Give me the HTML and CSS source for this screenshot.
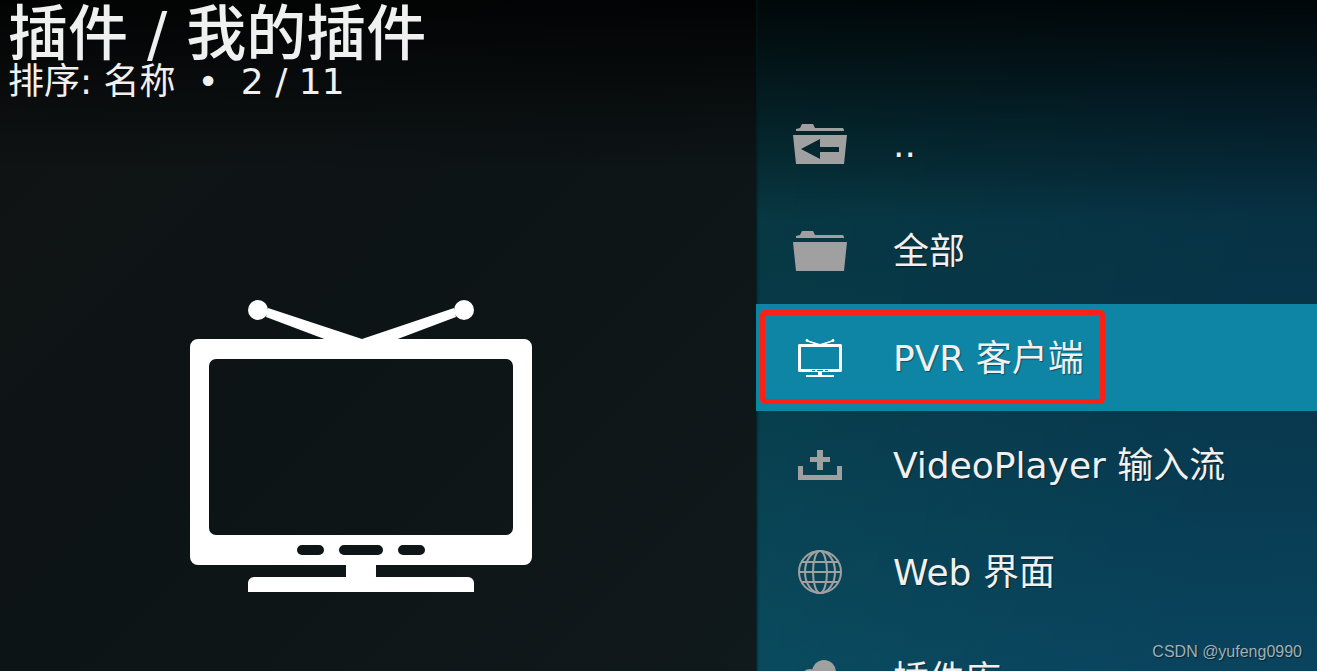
FILE: index.html
```
<!DOCTYPE html>
<html lang="zh-CN">
<head>
    <meta charset="UTF-8">
    <meta name="viewport" content="width=device-width, initial-scale=1.0">
    <title>插件 / 我的插件</title>
    <link rel="stylesheet" href="styles.css">
</head>
<body>
    <div class="screen">
        <!-- Left side: heading and preview -->
        <main class="preview">
            <header class="heading">
                <h1>插件 / 我的插件</h1>
                <p class="status"><span>排序: 名称</span><span>•</span><span>2 / 11</span></p>
            </header>
            <div class="artwork">
                <svg class="tv" viewBox="0 0 342 292" fill="#fff" aria-hidden="true">
                    <circle cx="68" cy="10" r="10"/>
                    <circle cx="274" cy="10" r="10"/>
                    <path d="M78 8 L172 39 L264 8 L266 17 L205 40 H137 L76 17 Z"/>
                    <path fill-rule="evenodd" d="M8 39H334a8 8 0 0 1 8 8V257a8 8 0 0 1-8 8H8a8 8 0 0 1-8-8V47a8 8 0 0 1 8-8Z
                        M26 59a7 7 0 0 0-7 7V228a7 7 0 0 0 7 7H316a7 7 0 0 0 7-7V66a7 7 0 0 0-7-7Z
                        M112 245a5 5 0 0 0 0 10H129a5 5 0 0 0 0-10Z
                        M154 245a5 5 0 0 0 0 10H188a5 5 0 0 0 0-10Z
                        M213 245a5 5 0 0 0 0 10H230a5 5 0 0 0 0-10Z"/>
                    <path d="M156 264H186V277H278a6 6 0 0 1 6 6V292H58V283a6 6 0 0 1 6-6H156Z"/>
                </svg>
            </div>
        </main>

        <!-- Right side: category list -->
        <nav class="panel">
            <ul class="list">
                <li class="row">
                    <a class="entry" href="#">
                        <span class="icon">
                            <svg width="56" height="40" viewBox="0 0 56 40" aria-hidden="true">
                                <path d="M4 7V5l4-1 2-4H21l2 4H51l1 2v1Z"/>
                                <path fill-rule="evenodd" d="M1 11H55L52 40H4Z M9 25L28 35V28H47V23H28V15Z"/>
                            </svg>
                        </span>
                        <span class="label">..</span>
                    </a>
                </li>
                <li class="row">
                    <a class="entry" href="#">
                        <span class="icon">
                            <svg width="56" height="40" viewBox="0 0 56 40" aria-hidden="true">
                                <path d="M4 7V5l4-1 2-4H21l2 4H51l1 2v1Z"/>
                                <path d="M1 11H55L52 40H4Z"/>
                            </svg>
                        </span>
                        <span class="label">全部</span>
                    </a>
                </li>
                <li class="row selected">
                    <a class="entry marked" href="#" aria-current="true">
                        <span class="icon">
                            <svg width="44" height="38" viewBox="0 0 44 38" aria-hidden="true">
                                <circle cx="9" cy="1.5" r="1.4"/>
                                <circle cx="35" cy="1.5" r="1.4"/>
                                <path d="M9 1L22 5L35 1V2.500L25 6H19L9 2.500Z"/>
                                <path fill-rule="evenodd" d="M1 5H43l1 1V32l-1 1H1l-1-1V6Z M3 8V30H41V8Z M14 31v1h3v-1Z M19 31v1h6v-1Z M27 31v1h3v-1Z"/>
                                <path d="M20 33H24V36H36V38H8V36H20Z"/>
                            </svg>
                        </span>
                        <span class="label">PVR 客户端</span>
                    </a>
                </li>
                <li class="row">
                    <a class="entry" href="#">
                        <span class="icon">
                            <svg width="44" height="30" viewBox="0 0 44 30" aria-hidden="true">
                                <path d="M0 16H5V25H39V16H44V30H0Z"/>
                                <path d="M19 0H25V7H32V12H25V20H19V12H12V7H19Z"/>
                            </svg>
                        </span>
                        <span class="label">VideoPlayer 输入流</span>
                    </a>
                </li>
                <li class="row">
                    <a class="entry" href="#">
                        <span class="icon">
                            <svg class="outline" width="44" height="44" viewBox="0 0 44 44" aria-hidden="true">
                                <circle cx="22" cy="22" r="21"/>
                                <ellipse cx="22" cy="22" rx="15" ry="21"/>
                                <ellipse cx="22" cy="22" rx="7" ry="21"/>
                                <path d="M1 22H43 M4 12H40 M4 32H40"/>
                            </svg>
                        </span>
                        <span class="label">Web 界面</span>
                    </a>
                </li>
                <li class="row">
                    <a class="entry" href="#">
                        <span class="icon">
                            <svg width="44" height="37" viewBox="0 0 44 37" aria-hidden="true">
                                <circle cx="26" cy="12" r="12"/>
                                <circle cx="12" cy="18" r="9"/>
                                <rect x="0" y="16" width="44" height="20" rx="10"/>
                            </svg>
                        </span>
                        <span class="label">插件库</span>
                    </a>
                </li>
            </ul>
        </nav>

        <p class="credit">CSDN @yufeng0990</p>
    </div>
</body>
</html>
```

FILE: styles.css
```
/* Add-on browser */
* {
    box-sizing: border-box;
}

body {
    margin: 0;
    font-family: "DejaVu Sans", "Noto Sans CJK SC", sans-serif;
    color: #f0f0f0;
    background: #0f1618;
}

h1, p, ul {
    margin: 0;
    padding: 0;
    font-weight: normal;
}

.screen {
    position: relative;
    display: flex;
    height: 100vh;
    overflow: hidden;
}

/* Heading and preview */
.preview {
    display: flex;
    flex-direction: column;
    width: 57.4%;
    background:
        linear-gradient(rgba(0, 0, 0, 0.85), rgba(0, 0, 0, 0) 170px),
        linear-gradient(135deg, #101314, #0d1416 50%, #10191b);
}

.heading {
    padding: 4px 8px 0;
}

.heading h1 {
    font-size: 60px;
    line-height: 60px;
    font-weight: 500;
}

.status {
    display: flex;
    gap: 22px;
    font-size: 36px;
    line-height: 36px;
}

.artwork {
    flex: 1;
    display: flex;
    align-items: center;
    justify-content: center;
    padding: 120px 34px 0 0;
}

.tv {
    width: 342px;
}

/* Category list */
.panel {
    flex: 1;
    padding-top: 90px;
    background:
        linear-gradient(rgba(0, 0, 0, 0.85), rgba(0, 0, 0, 0) 220px),
        linear-gradient(100deg, rgba(6, 64, 60, 0.2), rgba(6, 40, 70, 0.3) 80%),
        linear-gradient(#06303a, #083a4a 50%, #0b5068);
    box-shadow: inset 3px 0 3px -2px #041a1e;
}

.list {
    list-style: none;
}

.row {
    display: flex;
    height: 107px;
    padding: 6px 4px 7px;
}

.selected {
    background: #0f85a5;
}

.entry {
    display: flex;
    align-items: center;
    gap: 18px;
    padding-right: 16px;
    border: 5px solid transparent;
    border-radius: 5px;
    color: inherit;
    text-decoration: none;
}

.marked {
    border-color: #ff2014;
}

.icon {
    display: flex;
    justify-content: center;
    width: 110px;
    padding-top: 1px;
    fill: #a0a0a0;
}

.selected .icon {
    fill: #fff;
}

.icon .outline {
    fill: none;
    stroke: #a0a0a0;
    stroke-width: 2;
}

.label {
    padding-top: 4px;
    font-size: 36px;
    line-height: 44px;
    white-space: nowrap;
    text-shadow: 1px 1px 1px rgba(0, 0, 0, 0.4);
}

.credit {
    position: absolute;
    right: 15px;
    bottom: 9px;
    font-family: "Liberation Sans", sans-serif;
    font-size: 16px;
    line-height: 20px;
    color: #a0b0b8;
    text-shadow: 1px 1px 1px rgba(0, 0, 0, 0.5);
}
```
